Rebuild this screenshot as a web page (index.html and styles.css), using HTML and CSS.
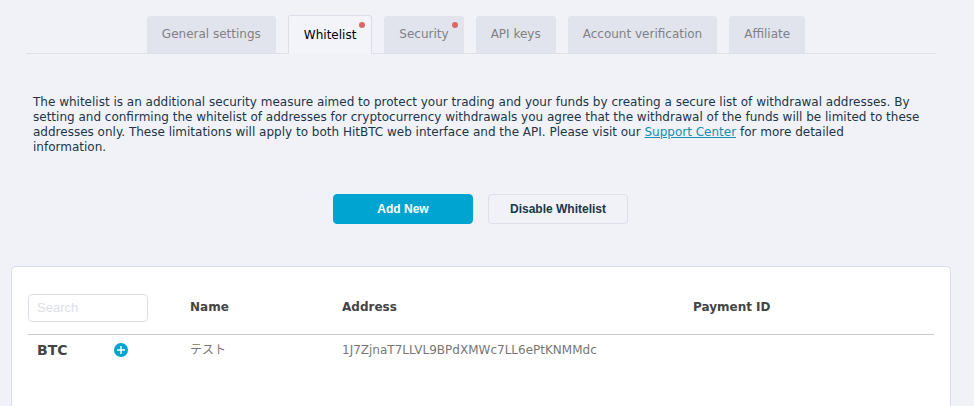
FILE: index.html
```html
<!DOCTYPE html>
<html lang="en">
<head>
<meta charset="utf-8">
<meta name="viewport" content="width=device-width, initial-scale=1">
<title>Whitelist</title>
<link rel="stylesheet" href="styles.css">
</head>
<body>
<nav class="tabs">
  <a class="tab" href="#general">General settings</a>
  <a class="tab tab-active" href="#whitelist" aria-current="page">Whitelist<span class="dot"></span></a>
  <a class="tab" href="#security">Security<span class="dot"></span></a>
  <a class="tab" href="#api">API keys</a>
  <a class="tab" href="#verification">Account verification</a>
  <a class="tab" href="#affiliate">Affiliate</a>
</nav>
<main class="content">
  <p class="intro">The whitelist is an additional security measure aimed to protect your trading and your funds by creating a secure list of withdrawal addresses. By setting and confirming the whitelist of addresses for cryptocurrency withdrawals you agree that the withdrawal of the funds will be limited to these addresses only. These limitations will apply to both HitBTC web interface and the API. Please visit our <a href="#support">Support Center</a> for more detailed information.</p>
  <div class="actions">
    <button class="button button-primary" type="button">Add New</button>
    <button class="button" type="button">Disable Whitelist</button>
  </div>
  <section class="card">
    <table class="addresses">
      <colgroup><col class="col-currency"><col class="col-name"><col class="col-address"><col></colgroup>
      <thead>
        <tr>
          <th><input class="search" type="text" placeholder="Search" aria-label="Search"></th>
          <th scope="col">Name</th>
          <th scope="col">Address</th>
          <th scope="col">Payment ID</th>
        </tr>
      </thead>
      <tbody>
        <tr>
          <th scope="row">
            <div class="currency">BTC
              <button class="add" type="button" aria-label="Add BTC address">
                <svg width="14" height="14" viewBox="0 0 14 14" aria-hidden="true"><circle cx="7" cy="7" r="7" fill="#00a4d1"/><path d="M7 3v8M3 7h8" stroke="#fff" stroke-width="1.4"/></svg>
              </button>
            </div>
          </th>
          <td lang="ja">テスト</td>
          <td>1J7ZjnaT7LLVL9BPdXMWc7LL6ePtKNMMdc</td>
          <td></td>
        </tr>
      </tbody>
    </table>
  </section>
</main>
</body>
</html>
```
FILE: styles.css
```css
* {
  box-sizing: border-box;
}

body {
  display: flex;
  flex-direction: column;
  min-height: 100vh;
  margin: 0;
  background: #f0f2f8;
  color: #1d3549;
  font: 12px/15px Verdana, "DejaVu Sans", "Noto Sans CJK JP", sans-serif;
}

.tabs {
  display: flex;
  justify-content: center;
  align-items: flex-end;
  gap: 12px;
  margin: 15px 38px 0 26px;
  padding-right: 10px;
  border-bottom: 1px solid #dddfe9;
}

.tab {
  position: relative;
  padding: 0 15px;
  border-radius: 3px 3px 0 0;
  background: #e1e4ec;
  color: #7f8185;
  line-height: 37px;
  text-decoration: none;
  white-space: nowrap;
}

.tab-active {
  margin-bottom: -1px;
  border: 1px solid #dcdeea;
  border-bottom: 0;
  background: #f3f4fa;
  color: #000;
  line-height: 38px;
}

.dot {
  position: absolute;
  top: 6px;
  right: 6px;
  width: 6px;
  height: 6px;
  border-radius: 50%;
  background: #d96865;
}

.content {
  display: flex;
  flex: 1;
  flex-direction: column;
}

.intro {
  margin: 41px 54px 0 33px;
}

.intro a {
  color: #168fb0;
}

.actions {
  display: flex;
  justify-content: center;
  gap: 15px;
  margin: 39px 13px 42px 0;
}

.button {
  width: 140px;
  height: 30px;
  padding: 0;
  border: 1px solid #dcdeea;
  border-radius: 4px;
  background: transparent;
  color: #1d3549;
  font: bold 12px "Liberation Sans", Arial, sans-serif;
}

.button-primary {
  border-color: #00a4d1;
  background: #00a4d1;
  color: #fff;
}

.card {
  flex: 1;
  margin: 0 23px 0 11px;
  padding: 16px;
  border: 1px solid #d9dbe8;
  border-bottom: 0;
  border-radius: 5px 5px 0 0;
  background: #fff;
}

.addresses {
  width: 100%;
  border-collapse: collapse;
  table-layout: fixed;
  color: #777;
}

.col-currency {
  width: 162px;
}

.col-name {
  width: 152px;
}

.col-address {
  width: 351px;
}

.addresses th,
.addresses td {
  padding: 0;
  text-align: left;
}

.addresses th {
  color: #444;
}

.addresses thead th {
  height: 51px;
  padding-bottom: 1px;
  border-bottom: 1px solid #c9cacd;
}

.addresses tbody th,
.addresses tbody td {
  height: 32px;
}

.search {
  display: block;
  width: 120px;
  height: 28px;
  padding: 0 8px;
  border: 1px solid #dcdeea;
  border-radius: 4px;
  background: #fff;
  color: #444;
  font: 13px "Liberation Sans", Arial, sans-serif;
}

.search::placeholder {
  color: #dcdee6;
}

.currency {
  display: flex;
  justify-content: space-between;
  align-items: center;
  width: 100px;
  padding-left: 9px;
  font-size: 14px;
}

.add {
  display: flex;
  padding: 0;
  border: 0;
  background: none;
}
```
